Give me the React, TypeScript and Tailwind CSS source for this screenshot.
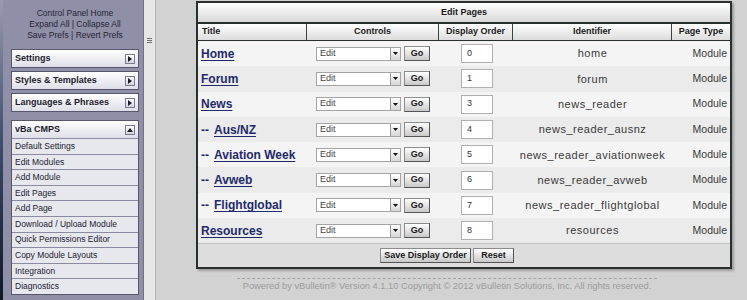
import type { ReactNode } from 'react';

const SIDE_ITEMS = [
    'Default Settings',
    'Edit Modules',
    'Add Module',
    'Edit Pages',
    'Add Page',
    'Download / Upload Module',
    'Quick Permissions Editor',
    'Copy Module Layouts',
    'Integration',
    'Diagnostics',
];

interface PageRow {
    title: string;
    child?: boolean;
    order: string;
    identifier: string;
}

const PAGES: PageRow[] = [
    { title: 'Home', order: '0', identifier: 'home' },
    { title: 'Forum', order: '1', identifier: 'forum' },
    { title: 'News', order: '3', identifier: 'news_reader' },
    { title: 'Aus/NZ', child: true, order: '4', identifier: 'news_reader_ausnz' },
    { title: 'Aviation Week', child: true, order: '5', identifier: 'news_reader_aviationweek' },
    { title: 'Avweb', child: true, order: '6', identifier: 'news_reader_avweb' },
    { title: 'Flightglobal', child: true, order: '7', identifier: 'news_reader_flightglobal' },
    { title: 'Resources', order: '8', identifier: 'resources' },
];

function ToggleIcon({ open }: { open?: boolean }) {
    return (
        <span className="flex h-[10px] w-[10px] items-center justify-center border border-[#7a7a90] bg-gradient-to-b from-white to-[#d4d4de]">
            <svg width="6" height="6" viewBox="0 0 6 6">
                {open ? <polygon points="0,5 6,5 3,1" fill="#1b1b2b" /> : <polygon points="1,0 5,3 1,6" fill="#1b1b2b" />}
            </svg>
        </span>
    );
}

function SideHeader({ label, open }: { label: string; open?: boolean }) {
    return (
        <div className="flex h-[17px] items-center justify-between bg-gradient-to-b from-white to-[#dedee8] pl-[3px] pr-[3px] text-[9px] font-bold text-[#1c1c2c]">
            <span>{label}</span>
            <ToggleIcon open={open} />
        </div>
    );
}

function SideGroup({ label }: { label: string }) {
    return (
        <div className="mt-[3px] border border-[#56566c] shadow-[inset_0_0_0_1px_#c4c4d4]">
            <SideHeader label={label} />
        </div>
    );
}

function Btn({ children, className = '' }: { children: ReactNode; className?: string }) {
    return (
        <span
            className={`flex items-center justify-center border border-[#8c8c8c] border-r-[#555] border-b-[#555] bg-gradient-to-b from-white to-[#c9c9c9] text-[9px] font-bold text-[#1a1a1a] ${className}`}
        >
            {children}
        </span>
    );
}

function Sidebar() {
    return (
        <div className="flex h-full w-[143px] shrink-0 bg-[#8f8fa7]">
            <div className="w-[3px] bg-gradient-to-b from-[#9a9ab0] via-[#3a4a6a] to-[#101828]" />
            <div className="flex-1 pr-[4px] pl-[8px]">
                <div className="pt-[8px] text-center text-[8.5px] leading-[11px] text-[#262636]">
                    <div>Control Panel Home</div>
                    <div>Expand All | Collapse All</div>
                    <div>Save Prefs | Revert Prefs</div>
                </div>
                <div className="mt-[8px]">
                    <SideGroup label="Settings" />
                    <SideGroup label="Styles & Templates" />
                    <SideGroup label="Languages & Phrases" />
                    <div className="mt-[8px] border border-[#56566c]">
                        <SideHeader label="vBa CMPS" open />
                        {SIDE_ITEMS.map(item => (
                            <div
                                key={item}
                                className="flex h-[15.6px] items-center border-t border-[#8a8aa2] bg-[#e7e7ee] pl-[3px] text-[8.5px] text-[#222230]"
                            >
                                {item}
                            </div>
                        ))}
                    </div>
                </div>
            </div>
        </div>
    );
}

function Divider() {
    return (
        <div className="flex h-full w-[13px] shrink-0 flex-col items-center border-l border-[#707086] border-r border-r-[#b4b4b4] bg-[#e6e6e6] pt-[38px]">
            <div className="flex flex-col gap-[1px]">
                <span className="h-[1px] w-[5px] bg-[#707070]" />
                <span className="h-[1px] w-[5px] bg-[#707070]" />
                <span className="h-[1px] w-[5px] bg-[#707070]" />
            </div>
        </div>
    );
}

function PagesTable() {
    const cols = 'grid grid-cols-[109px_132px_74px_159px_58px]';
    return (
        <div className="w-[536px] border-2 border-[#27302f] bg-[#f3f3f3] shadow-[2px_2px_2px_rgba(0,0,0,0.25)]">
            <div className="flex h-[21px] items-center justify-center border-b-2 border-[#27302f] bg-gradient-to-b from-white to-[#d9d9d9] text-[9px] font-bold text-[#1a1a1a]">
                Edit Pages
            </div>
            <div className={`${cols} h-[17px] border-b border-[#27302f] bg-gradient-to-b from-white to-[#dcdcdc] text-[9px] font-bold text-[#1a1a1a]`}>
                <div className="flex items-center border-r border-[#3a4444] pl-[4px]">Title</div>
                <div className="flex items-center justify-center border-r border-[#3a4444]">Controls</div>
                <div className="flex items-center justify-center border-r border-[#3a4444]">Display Order</div>
                <div className="flex items-center justify-center border-r border-[#3a4444]">Identifier</div>
                <div className="flex items-center justify-center">Page Type</div>
            </div>
            {PAGES.map((p, i) => (
                <div
                    key={p.identifier}
                    className={`${cols} h-[25.3px] ${i % 2 === 0 ? 'bg-[#f4f4f4]' : 'bg-[#ebebeb]'}`}
                >
                    <div className="flex items-center pl-[3px] text-[12px] font-bold text-[#1f2a6b]">
                        {p.child && <span className="mr-[5px]">--</span>}
                        <span className="underline decoration-[1px] underline-offset-[2px]">{p.title}</span>
                    </div>
                    <div className="flex items-center justify-center gap-[3px]">
                        <div className="flex h-[14px] w-[85px] items-center border border-[#a4a4a4] bg-white">
                            <span className="flex-1 pl-[3px] text-[9px] text-[#444]">Edit</span>
                            <span className="flex h-[12px] w-[10px] items-center justify-center border-l border-[#9a9a9a] bg-gradient-to-b from-white to-[#d6d6d6]">
                                <svg width="5" height="3" viewBox="0 0 5 3">
                                    <polygon points="0,0 5,0 2.5,3" fill="#111" />
                                </svg>
                            </span>
                        </div>
                        <Btn className="h-[15px] w-[26px]">Go</Btn>
                    </div>
                    <div className="flex items-center justify-center pl-[2px]">
                        <div className="flex h-[19px] w-[32px] items-center border border-[#b0b0b0] bg-white pl-[5px] text-[9px] text-[#333]">
                            {p.order}
                        </div>
                    </div>
                    <div className="flex items-center justify-center text-[11px] tracking-[0.5px] text-[#3a3a3a]">
                        {p.identifier}
                    </div>
                    <div className="flex items-center justify-end pr-[3px] text-[10.5px] text-[#3a3a3a]">Module</div>
                </div>
            ))}
            <div className="flex h-[24px] items-center justify-center gap-[2px] border-t border-[#c4c4c4] bg-[#dddddd] pr-[34px]">
                <Btn className="h-[15px] w-[91px]">Save Display Order</Btn>
                <Btn className="h-[15px] w-[41px]">Reset</Btn>
            </div>
        </div>
    );
}

export default function App() {
    return (
        <div className="flex h-[300px] w-[747px] overflow-hidden bg-[#d2d2d2] font-['Liberation_Sans',Arial,sans-serif]">
            <Sidebar />
            <Divider />
            <div className="flex-1 pt-[1px] pl-[40px]">
                <PagesTable />
                <div className="ml-[41px] mt-[9px] flex w-[420px] justify-center border-t border-dashed border-[#a6a6a6] pt-[1px]">
                    <span className="whitespace-nowrap text-[9.3px] text-[#9c9c9c]">
                        Powered by vBulletin® Version 4.1.10 Copyright © 2012 vBulletin Solutions, Inc. All rights reserved.
                    </span>
                </div>
            </div>
        </div>
    );
}
